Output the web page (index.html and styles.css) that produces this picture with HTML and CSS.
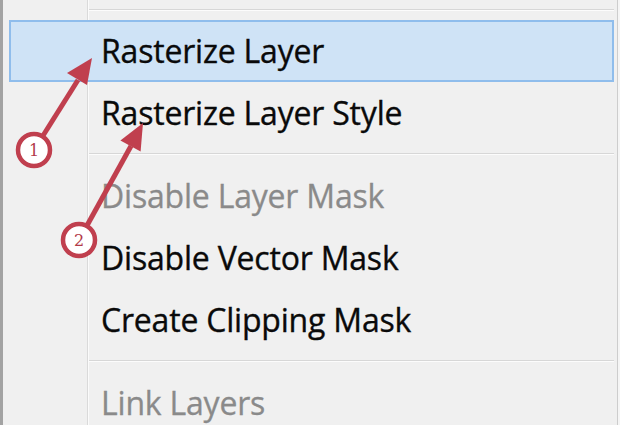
FILE: index.html
```html
<!DOCTYPE html>
<html>
<head>
<meta charset="utf-8">
<link rel="stylesheet" href="styles.css">
</head>
<body>
<div class="menu">
  <div class="sep sep-top"></div>
  <div class="item active">Rasterize Layer</div>
  <div class="item">Rasterize Layer Style</div>
  <div class="sep"></div>
  <div class="item disabled">Disable Layer Mask</div>
  <div class="item">Disable Vector Mask</div>
  <div class="item">Create Clipping Mask</div>
  <div class="sep"></div>
  <div class="item disabled">Link Layers</div>
  <svg class="notes" width="620" height="425" viewBox="0 0 620 425">
    <g class="arrow">
      <line x1="34" y1="150" x2="78" y2="80" />
      <polygon points="92,58 67,73 87,85" />
      <circle cx="34" cy="150" r="16" />
      <text x="34" y="156">1</text>
    </g>
    <g class="arrow">
      <line x1="79" y1="240" x2="131" y2="146" />
      <polygon points="143,123 120.4,140.4 140.6,151.4" />
      <circle cx="79" cy="240" r="16" />
      <text x="79" y="246">2</text>
    </g>
  </svg>
</div>
</body>
</html>
```

FILE: styles.css
```css
html, body {
  margin: 0;
  padding: 0;
}
body {
  width: 620px;
  height: 425px;
  overflow: hidden;
  background: #f5f5f5;
}
.menu {
  position: relative;
  box-sizing: border-box;
  width: 618px;
  height: 425px;
  border-left: 3px solid #a3a3a3;
  border-right: 1px solid #cdcdcd;
  background-color: #f0f0f0;
  background-image: linear-gradient(to right, transparent 84px, #dadada 84px, #dadada 85px, #fbfbfb 85px, #fbfbfb 86px, transparent 86px);
  padding-top: 9px;
  font-family: "Open Sans", "Noto Sans", sans-serif;
}
.sep {
  height: 1px;
  background: #d7d7d7;
  border-bottom: 1px solid #fcfcfc;
  margin: 9px 3px 10px 86px;
}
.sep-top {
  margin-top: 0;
  margin-bottom: 9px;
}
.item {
  box-sizing: border-box;
  height: 62px;
  line-height: 60px;
  margin: 0 3px 0 6px;
  padding-left: 91px;
  border: 1px solid transparent;
  font-size: 32px;
  color: #0a0a0a;
  letter-spacing: -0.2px;
  -webkit-text-stroke: 0.35px #0a0a0a;
  white-space: nowrap;
}
.item.active {
  background: #cfe3f6;
  border: 2px solid #8fbdec;
  padding-left: 90px;
  line-height: 58px;
}
.item.disabled {
  color: #8a8a8a;
  -webkit-text-stroke: 0.3px #8a8a8a;
}
.notes {
  position: absolute;
  left: -3px;
  top: 0;
}
.arrow line {
  stroke: #c03f4e;
  stroke-width: 5;
}
.arrow polygon {
  fill: #c03f4e;
}
.arrow circle {
  fill: #ffffff;
  stroke: #c03f4e;
  stroke-width: 4.5;
}
.arrow text {
  font-family: "DejaVu Serif", "Liberation Serif", serif;
  font-size: 16px;
  fill: #b23a49;
  text-anchor: middle;
}
```
